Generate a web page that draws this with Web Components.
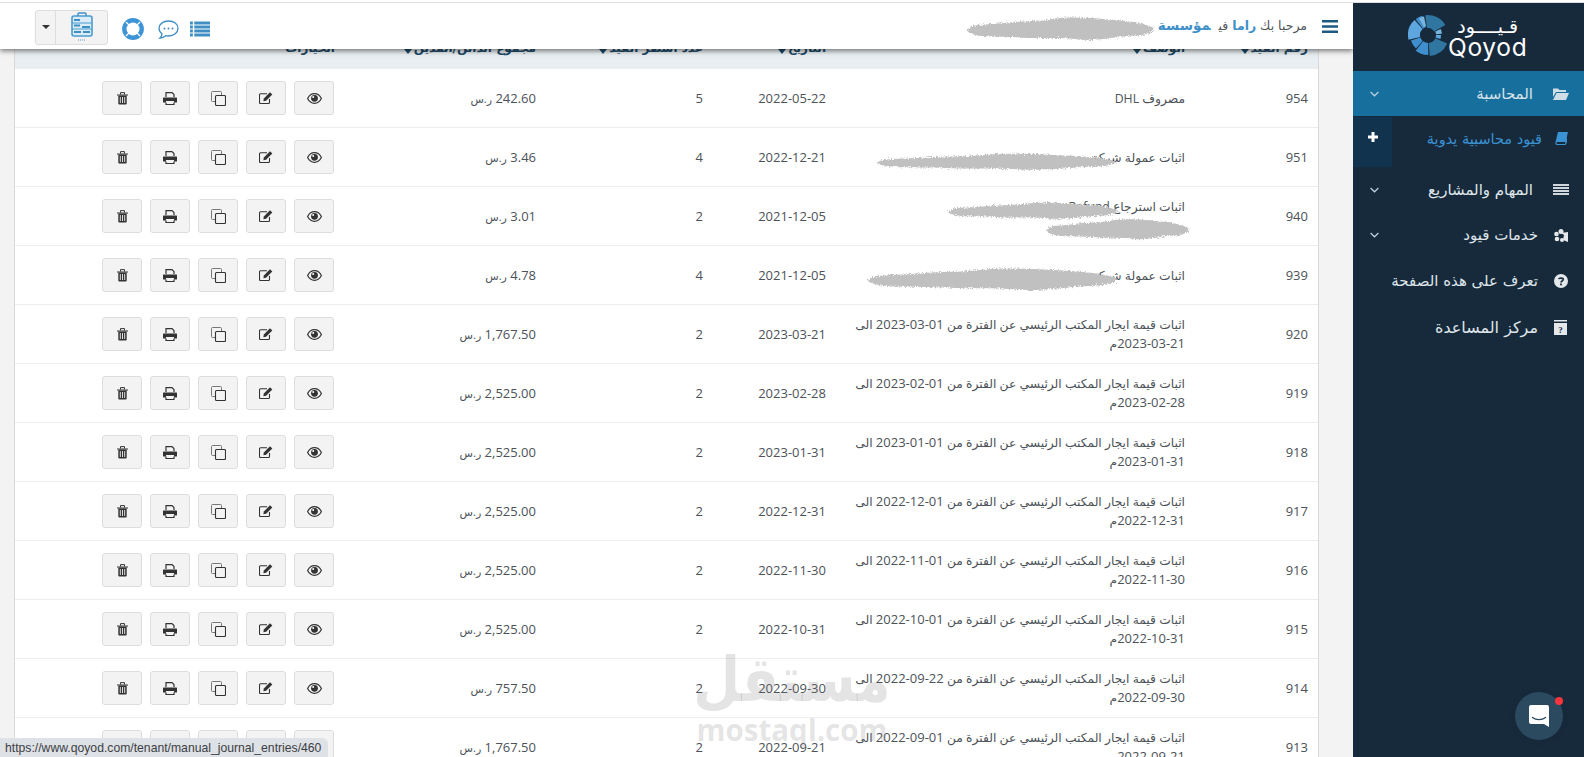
<!DOCTYPE html>
<html lang="ar" dir="rtl"><head><meta charset="utf-8">
<style>
html,body{margin:0;height:100%;overflow:hidden;background:#f3f3f3}
body{font:12.5px "Open Sans","DejaVu Sans",sans-serif;color:#4c5258}
</style></head><body>
<template id="t-app">
<style>
:host{display:grid;grid-template-columns:231px 1fr;grid-template-rows:3px 1fr;height:757px;overflow:hidden;direction:rtl}
.strip{grid-column:1/3;height:3px;background:#fff;border-bottom:1px solid #ddd;box-sizing:border-box}
.main{min-width:0;display:flex;flex-direction:column;overflow:hidden;background:#f3f3f3}
qo-table{margin:0 34px 0 14px}
qo-navbar{margin-bottom:-20px}
</style>
<div class="strip"></div>
<qo-sidebar></qo-sidebar>
<div class="main"><qo-navbar></qo-navbar><qo-table></qo-table></div>
<qo-watermark></qo-watermark>
<qo-status></qo-status>
<qo-launcher></qo-launcher>
</template>

<script>
const ICON={
eye:'<svg width="15" height="11" viewBox="0 0 15 11"><path d="M.6 5.500C2.200 2.300 4.600.7 7.500.7s5.300 1.600 6.900 4.800c-1.600 3.200-4 4.800-6.900 4.800S2.200 8.700.6 5.500z" fill="none" stroke="#333" stroke-width="1.200"/><circle cx="7.500" cy="5.300" r="3.400" fill="#333"/><circle cx="6.200" cy="4" r="1" fill="#fff"/></svg>',
edit:'<svg width="15" height="12" viewBox="0 0 15 12"><path d="M10.500 7v3.500a1 1 0 0 1-1 1H1.500a1 1 0 0 1-1-1V2.800a1 1 0 0 1 1-1H8" fill="none" stroke="#333" stroke-width="1.100"/><path d="M4.800 6.500l6.200-6.200 2.300 2.300-6.200 6.200-2.700.4z" fill="#333"/></svg>',
copy:'<svg width="15" height="15" viewBox="0 0 15 15" fill="none"><path d="M4 10.500H1.500a1 1 0 0 1-1-1V1.500a1 1 0 0 1 1-1h8a1 1 0 0 1 1 1V4" stroke="#777" stroke-width="1"/><rect x="4.500" y="4.500" width="10" height="10" rx="1" stroke="#333" stroke-width="1.100"/></svg>',
print:'<svg width="14" height="13" viewBox="0 0 14 13"><path d="M3 5V.6h6l2 2V5M3 10.500v2h8v-2" fill="none" stroke="#333" stroke-width="1.200"/><path d="M.6 5.500h12.800a.6.6 0 0 1 .6.6V10a.6.6 0 0 1-.6.6H11V9H3v1.600H.6A.6.6 0 0 1 0 10V6.100a.6.6 0 0 1 .6-.6z" fill="#333"/></svg>',
trash:'<svg width="11" height="13" viewBox="0 0 11 13"><path d="M0 2.500h11v1H0z" fill="#333"/><path d="M3.500 2.500V.6h4v1.900" fill="none" stroke="#333"/><path d="M1.300 3.500h8.400v8a1 1 0 0 1-1 1H2.300a1 1 0 0 1-1-1z" fill="#333"/><path d="M3.300 5v6M5.500 5v6M7.700 5v6" stroke="#f3f3f3" stroke-width=".9"/></svg>'
};
let uid=0;
const P1="M1 11C3 6 10 7 18 6 27 4 36 5 45 3 55 1 66 2 74 3 84 4 93 5 99 9 100 13 94 15 85 15 74 17 66 19 57 17 47 16 38 17 29 16 18 15 5 17 1 11z";
const BLOB=(w,h,pos='',d=P1)=>{const id='rough'+(++uid);return `<svg style="${pos}" width="${w}" height="${h}" viewBox="0 0 ${w} ${h}"><filter id="${id}" x="-5%" y="-20%" width="110%" height="140%"><feTurbulence type="fractalNoise" baseFrequency=".7" numOctaves="2" seed="${uid}"/><feDisplacementMap in="SourceGraphic" scale="5"/></filter><g filter="url(#${id})"><path transform="scale(${w/100} ${h/20})" d="${d}" fill="#c0c0c0"/></g></svg>`};
const wedge=(a0,a1,r0,r1,c,cx=20,cy=21)=>{const p=(r,a)=>(cx+r*Math.cos(a*Math.PI/180)).toFixed(1)+' '+(cy+r*Math.sin(a*Math.PI/180)).toFixed(1);return `<path d="M${p(r0,a0)}L${p(r1,a0)}A${r1} ${r1} 0 0 1 ${p(r1,a1)}L${p(r0,a1)}A${r0} ${r0} 0 0 0 ${p(r0,a0)}z" fill="${c}"/>`};
const LOGO=[[-98,-30,7,20,'#2f76a0'],[-25,-5,8,14,'#78b4dc'],[0,18,8,13,'#5da6e0'],[24,85,8,21,'#2f76a0'],[89,128,8,20,'#3f8fcf'],[132,162,8,18,'#3f8fcf'],[166,228,8,20,'#5da6e0'],[232,254,8,20,'#3f8fcf']].map(a=>wedge(...a)).join('')+wedge(-118,-102,9,19,'#78b4dc');
const CH='<svg width="9" height="6" viewBox="0 0 9 6" fill="none" stroke="#b9d2e0" stroke-width="1.200"><path d="M.6 1l3.900 3.800L8.400 1"/></svg>';
const CARET='<svg width="8" height="5" viewBox="0 0 8 5"><path d="M0 0h8L4 5z" fill="#1f4a68"/></svg>';

class Base extends HTMLElement{
  constructor(){super();this.attachShadow({mode:'open'});const t=this.constructor.tpl;
    if(typeof t==='string')this.shadowRoot.innerHTML=t;else this.shadowRoot.append(t.content.cloneNode(true));}
}
class QoApp extends Base{static tpl=document.getElementById('t-app')}

class QoSidebar extends Base{static tpl=`<style>
:host{display:block;background:#172a3c;color:#dfe5ea;font:15px "DejaVu Sans",sans-serif;height:754px}
.logo{height:68px;display:flex;align-items:center;justify-content:flex-start;direction:ltr;padding:0 0 0 55px;box-sizing:border-box}
.lt{display:flex;flex-direction:column;color:#fff;line-height:1;margin-left:0}
.lt b{font:400 24.500px "Inter","Open Sans",sans-serif;letter-spacing:.7px;line-height:21px}
.lt i{font:400 19px "DejaVu Sans",sans-serif;font-style:normal;line-height:21px;text-align:center;direction:rtl}
.it{display:flex;align-items:center;height:46px;padding:0 15px 0 0;box-sizing:border-box}
.ic{width:17px;display:flex;justify-content:center;margin-inline-end:14px;flex:none}
.ch{margin-inline-start:auto;margin-inline-end:17px;display:flex}
.act{background:#176f9e;height:45px;color:#d7e3ea}
.sub{height:51px;display:flex;color:#3b93d3}
.sub .txt{flex:1;display:flex;align-items:center;padding-right:14px;height:51px;padding-bottom:6px;box-sizing:border-box;font-size:14.500px}
.sub .plus{width:39px;background:#12334d;height:50px;margin-top:1px;display:flex;justify-content:center;padding-top:15px;box-sizing:border-box}
</style>
<div class="logo">
<svg width="40" height="46" viewBox="0 0 40 46" style="flex:none">${LOGO}</svg>
<div class="lt"><i>قـيــــود</i><b>Qoyod</b></div></div>
<div class="it act"><span class="ic"><svg width="16" height="13" viewBox="0 0 16 13"><path d="M0 1.500h5l1.500 1.500H13v2H3L0 10z" fill="#cfdde6"/><path d="M3.500 6H16l-3 7H0z" fill="#cfdde6"/></svg></span><span style="margin-right:5px">المحاسبة</span><span class="ch">${CH}</span></div>
<div class="sub"><div class="txt"><span class="ic" style="margin-inline-end:11px"><svg width="13" height="13" viewBox="0 0 13 13"><path d="M3 0h10l-2.500 10H2.200c-1 0-1 2 0 2H10l2-7.500v6L10.500 13H2C.5 13 0 11.500.5 10z" fill="#3b93d3"/></svg></span>قيود محاسبية يدوية</div>
<div class="plus"><svg width="10" height="10" viewBox="0 0 10 10"><path d="M3.500 0h3v3.500H10v3H6.500V10h-3V6.500H0v-3h3.500z" fill="#fff"/></svg></div></div>
<div class="it" style="height:45px"><span class="ic"><svg width="16" height="11" viewBox="0 0 16 11" fill="#cfd6dc"><path d="M0 0h16v2H0zM0 3h16v2H0zM0 6h16v2H0zM0 9h16v2H0z"/></svg></span><span style="margin-right:5px">المهام والمشاريع</span><span class="ch">${CH}</span></div>
<div class="it"><span class="ic"><svg width="14" height="13" viewBox="0 0 14 13" fill="#e4e8eb"><circle cx="7" cy="2.500" r="2.500"/><circle cx="2.500" cy="5" r="2.300"/><circle cx="3" cy="10" r="2.300"/><circle cx="8" cy="11" r="2"/><path d="M7 4l7-1v10l-5-2 1-5z"/></svg></span>خدمات قيود<span class="ch">${CH}</span></div>
<div class="it"><span class="ic"><svg width="14" height="14" viewBox="0 0 14 14"><circle cx="7" cy="7" r="7" fill="#e4e8eb"/><path d="M4.800 5.200C5 3.800 9.300 3.600 9.300 5.600 9.300 7 7 7 7 8.400" fill="none" stroke="#172a3c" stroke-width="1.600"/><rect x="6.100" y="9.500" width="1.800" height="1.800" fill="#172a3c"/></svg></span>تعرف على هذه الصفحة</div>
<div class="it" style="font-size:16px"><span class="ic"><svg width="13" height="15" viewBox="0 0 13 15"><path d="M0 0h13v1.500H0z" fill="#e4e8eb"/><path d="M0 3h13v12H0z" fill="#e4e8eb"/><text x="6.500" y="13" text-anchor="middle" font-size="9" font-weight="700" fill="#172a3c" font-family="Liberation Serif">?</text></svg></span>مركز المساعدة</div>
`}

class QoNavbar extends Base{static get tpl(){return `<style>
:host{display:flex;align-items:center;height:46px;background:#fff;position:relative;z-index:3;box-shadow:0 2px 5px rgba(0,0,0,.5);padding:0 15px 0 35px;direction:rtl;font:12.500px "DejaVu Sans",sans-serif;color:#4f5559;flex:none}
.bars{margin-left:15px;display:flex}
.b{color:#3f90c9;font-weight:700}
.o{font-size:13.500px;margin-right:8px}
.red{width:190px;height:28px;margin-right:3px;display:flex;position:relative;top:3px}
.tools{margin-right:auto;display:flex;align-items:center;direction:ltr;order:3;position:relative;top:3px}
.group{display:flex;height:35px;border:1px solid #ddd;border-radius:3px;background:#f3f3f3;box-sizing:border-box;margin-right:14px;position:relative;top:-2px}
.caret{width:19px;border-right:1px solid #ddd;display:flex;align-items:center;justify-content:center}
.bag{width:51px;display:flex;align-items:center;justify-content:center}
.tools svg{display:block}
</style>
<span class="bars"><svg width="16" height="13" viewBox="0 0 16 13" fill="#1e5a80"><path d="M0 0h16v2.600H0zM0 5.200h16v2.600H0zM0 10.400h16V13H0z"/></svg></span>
<span style="position:relative;top:-1px">مرحبا بك <span class="b">راما</span> في<span class="b o">مؤسسة</span></span>
<span class="red">${BLOB(190,28)}</span>
<div class="tools">
<div class="group"><span class="caret"><svg width="8" height="4" viewBox="0 0 8 4"><path d="M0 0h8L4 4z" fill="#333"/></svg></span>
<span class="bag"><svg width="22" height="30" viewBox="0 0 22 30"><path d="M7 4V2a1 1 0 0 1 1-1h6a1 1 0 0 1 1 1v2" fill="none" stroke="#3f8fc4" stroke-width="1.500"/><rect x="1" y="4" width="20" height="20" rx="2" fill="#d9ecf7" stroke="#4a9ccf" stroke-width="1.600"/><path d="M1 11h20M1 17h20" stroke="#4a9ccf"/><path d="M3 7h6v2H3zM3 12.500h6v2H3zM11 14h8v2h-8zM3 19h7v2H3zM12 19h7v2h-7z" fill="#3f8fc4"/><path d="M7 28h8" stroke="#8ab6d3" stroke-width="1.500" stroke-dasharray="1 1"/></svg></span></div>
<span style="margin-right:14px"><svg width="22" height="22" viewBox="0 0 22 22"><circle cx="11" cy="11" r="8.700" fill="none" stroke="#3d95d6" stroke-width="4.400"/><path d="M4 4l3.700 3.700M18 4l-3.700 3.700M4 18l3.700-3.700M18 18l-3.700-3.700" stroke="#fff" stroke-width="1.300"/></svg></span>
<span style="margin-right:11px"><svg width="21" height="19" viewBox="0 0 21 19"><path d="M10.500 1C5 1 1 4.200 1 8.300c0 2.200 1.200 4.200 3 5.500-.2 1.700-1 3.300-2 4.200 2.500-.2 4.500-1.200 5.700-2.300 1 .2 1.800.3 2.800.3 5.500 0 9.500-3.400 9.500-7.700S16 1 10.500 1z" fill="none" stroke="#3f8fc4" stroke-width="1.300"/><circle cx="6.500" cy="8.500" r="1" fill="#3f8fc4"/><circle cx="10.500" cy="8.500" r="1" fill="#3f8fc4"/><circle cx="14.500" cy="8.500" r="1" fill="#3f8fc4"/></svg></span>
<span style="margin-right:10px"><svg width="20" height="16" viewBox="0 0 21 16" fill="#3f8fc4"><path d="M0 0h3v3.400H0zM4.500 0H21v3.400H4.500zM0 4.200h3v3.400H0zM4.500 4.200H21v3.400H4.500zM0 8.400h3v3.400H0zM4.500 8.400H21v3.400H4.500zM0 12.600h3V16H0zM4.500 12.600H21V16H4.500z"/></svg></span>
</div>`}}

class QoBtn extends Base{static tpl=`<style>
:host{display:flex;width:40px;height:34px;box-sizing:border-box;background:#f3f3f3;border:1px solid #ddd;border-radius:3px;align-items:center;justify-content:center;flex:none}
</style><slot></slot>`}

class QoRow extends Base{static tpl=`<style>
:host{display:grid;grid-template-columns:123px 359px 123px 167px 201px 1fr;height:59px;box-sizing:border-box;border-top:1px solid #eee;align-items:center;direction:rtl;font:13px "Open Sans","DejaVu Sans",sans-serif;color:#4c5258;flex:none;position:relative}
.c{padding:0 10px;min-width:0;line-height:19px}
.d{font-size:12.300px;padding-right:10px;padding-left:0}
.btns{display:flex;gap:8px;padding:0 11px;direction:rtl}
.n{direction:ltr;text-align:right}
.sar{font-size:11px}
::slotted(svg){position:absolute}
::slotted(span){font-size:13px;white-space:nowrap;direction:ltr;unicode-bidi:isolate}
</style>
<div class="c n" id="id"></div><div class="c d"><slot></slot></div><div class="c n" id="dt"></div><div class="c n" id="ct"></div><div class="c"><span id="am"></span> <span class="sar">ر.س</span></div>
<div class="btns">
<qo-btn>${ICON.eye}</qo-btn><qo-btn>${ICON.edit}</qo-btn><qo-btn>${ICON.copy}</qo-btn><qo-btn>${ICON.print}</qo-btn><qo-btn>${ICON.trash}</qo-btn>
</div>`;
  connectedCallback(){const s=this.shadowRoot;
    s.getElementById('id').textContent=this.getAttribute('n');
    s.getElementById('dt').textContent=this.getAttribute('date');
    s.getElementById('ct').textContent=this.getAttribute('count');
    s.getElementById('am').textContent=this.getAttribute('amount');}
}

class QoTable extends Base{static tpl=`<style>
:host{display:block;background:#fff;border:1px solid #d9d9d9;border-width:0 1px;direction:rtl;flex:none}
.h{display:grid;grid-template-columns:123px 359px 123px 167px 201px 1fr;height:39px;background:#e8eef1;align-items:center;font:700 12px "DejaVu Sans",sans-serif;color:#1f4a68}
.h div{padding:0 10px;position:relative;top:-1px;white-space:nowrap;display:flex;align-items:center;gap:2px}
.h svg{display:block;position:relative;top:4px}
</style>
<div class="h">
<div>رقم القيد${CARET}</div>
<div>الوصف${CARET}</div>
<div>التاريخ${CARET}</div>
<div>عدد أسطر القيد${CARET}</div>
<div>مجموع الدائن/المدين${CARET}</div>
<div>الخيارات</div>
</div><slot></slot>`;
  connectedCallback(){
    const rent=(a,b)=>`اثبات قيمة ايجار المكتب الرئيسي عن الفترة من <span>${a}</span> الى <span>${b}</span>م`;
    const rows=[
['954','2022-05-22','5','242.60','مصروف DHL'],
['951','2022-12-21','4','3.46','اثبات عمولة شركة'],
['940','2021-12-05','2','3.01','اثبات استرجاع Refund<br>&nbsp;'],
['939','2021-12-05','4','4.78','اثبات عمولة شركة'],
['920','2023-03-21','2','1,767.50',rent('2023-03-01','2023-03-21')],
['919','2023-02-28','2','2,525.00',rent('2023-02-01','2023-02-28')],
['918','2023-01-31','2','2,525.00',rent('2023-01-01','2023-01-31')],
['917','2022-12-31','2','2,525.00',rent('2022-12-01','2022-12-31')],
['916','2022-11-30','2','2,525.00',rent('2022-11-01','2022-11-30')],
['915','2022-10-31','2','2,525.00',rent('2022-10-01','2022-10-31')],
['914','2022-09-30','2','757.50',rent('2022-09-22','2022-09-30')],
['913','2022-09-21','2','1,767.50',rent('2022-09-01','2022-09-21')]];
    for(const [n,d,c,a,t] of rows){
      const r=document.createElement('qo-row');
      r.setAttribute('n',n);r.setAttribute('date',d);r.setAttribute('count',c);r.setAttribute('amount',a);
      r.innerHTML=t;
      this.append(r);
      if(n==='951')r.insertAdjacentHTML('beforeend',BLOB(244,20,'right:200px;top:24px'));
      if(n==='940'){r.insertAdjacentHTML('beforeend',BLOB(173,20,'right:199px;top:14px'));
        r.insertAdjacentHTML('beforeend',BLOB(145,25,'right:128px;top:30px'));}
      if(n==='939')r.insertAdjacentHTML('beforeend',BLOB(254,27,'right:199px;top:20px'));
    }
  }
}

class QoWatermark extends Base{static tpl=`<style>
:host{position:absolute;left:697px;top:647px;width:190px;display:flex;flex-direction:column;align-items:center;color:rgba(120,120,120,.2);pointer-events:none;z-index:2;direction:ltr}
.a{font:700 54px/62px "DejaVu Sans",sans-serif;height:62px;white-space:nowrap;transform:scaleY(1.15);transform-origin:50% 20%}
.b{font:700 29.500px/32px "Open Sans",sans-serif;margin-top:5px}
</style><div class="a">مستقل</div><div class="b">mostaql.com</div>`}

class QoStatus extends Base{static tpl=`<style>
:host{position:absolute;left:0;bottom:0;height:19px;width:328px;background:#dee1e6;border-top-right-radius:6px;box-sizing:border-box;padding:0 5px;display:flex;align-items:center;direction:ltr;font:12.200px "Liberation Sans",sans-serif;color:#3c4043;z-index:5;white-space:nowrap}
</style>https://www.qoyod.com/tenant/manual_journal_entries/460`}

class QoLauncher extends Base{static tpl=`<style>
:host{position:absolute;left:1515px;top:692px;width:48px;height:48px;border-radius:50%;background:#2b4a5f;box-shadow:0 1px 6px rgba(0,0,0,.1);z-index:5;display:flex;align-items:center;justify-content:center}
i{position:absolute;top:5px;right:0;width:8px;height:8px;border-radius:50%;background:#f9343d}
</style><svg width="22" height="24" viewBox="0 0 22 24"><path d="M3 1h16a2 2 0 0 1 2 2v20l-5-3H3a2 2 0 0 1-2-2V3a2 2 0 0 1 2-2z" fill="#fff"/><path d="M4.500 13.500c3.500 2.800 9.500 2.800 13 0" fill="none" stroke="#2b4a5f" stroke-width="1.300" stroke-linecap="round"/></svg><i></i>`}

customElements.define('qo-btn',QoBtn);
customElements.define('qo-row',QoRow);
customElements.define('qo-table',QoTable);
customElements.define('qo-navbar',QoNavbar);
customElements.define('qo-sidebar',QoSidebar);
customElements.define('qo-watermark',QoWatermark);
customElements.define('qo-status',QoStatus);
customElements.define('qo-launcher',QoLauncher);
customElements.define('qo-app',QoApp);
</script>
<qo-app></qo-app>
</body></html>
